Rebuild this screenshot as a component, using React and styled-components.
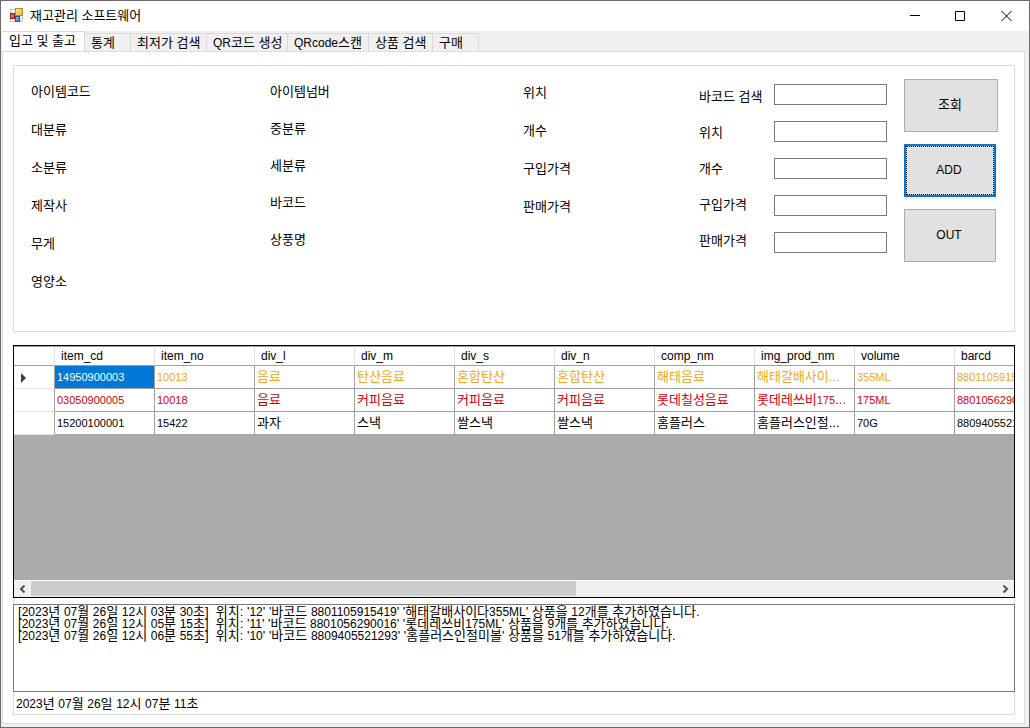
import React from "react";
import styled, { createGlobalStyle, css } from "styled-components";

const Global = createGlobalStyle`
  *, *::before, *::after { box-sizing: border-box; }
  body {
    margin: 0;
    background: #fff;
    color: #000;
    font: 13px/16px "Liberation Sans", "Noto Sans CJK KR", sans-serif;
  }
  button, input { font: inherit; color: inherit; border-radius: 0; margin: 0; }
`;

const Window = styled.div`
  min-height: 100vh;
  display: flex;
  flex-direction: column;
  border: 1px solid #6b696b;
  background: #f0f0f0;
`;

const TitleBar = styled.header`
  display: flex;
  align-items: center;
  height: 30px;
  padding-left: 8px;
  background: #fff;
`;

const Title = styled.h1`
  flex: 1;
  margin: 0 0 0 5px;
  font-size: 13px;
  line-height: 16px;
  font-weight: 400;
`;

const CaptionButton = styled.button`
  display: flex;
  align-items: center;
  justify-content: center;
  width: 46px;
  height: 28px;
  padding: 0;
  border: 0;
  background: transparent;
`;

const TabStrip = styled.nav`
  display: flex;
  align-items: flex-end;
  height: 20px;
  padding-left: 1px;
`;

const Tab = styled.button`
  width: ${(p) => p.$width}px;
  height: 18px;
  padding: 0 0 0 6px;
  border: solid #d9d9d9;
  border-width: 1px 1px 0 0;
  background: #f0f0f0;
  text-align: left;
  line-height: 16px;
  white-space: nowrap;
  ${(p) =>
    p.$active &&
    css`
      height: 20px;
      padding: 0 0 2px 7px;
      background: #fff;
    `}
`;

const Page = styled.main`
  flex: 1;
  display: flex;
  flex-direction: column;
  margin: 0 4px 3px 1px;
  padding: 13px 9px 8px 10px;
  border: 1px solid #dcdcdc;
  background: #fff;
`;

const Panel = styled.section`
  display: grid;
  grid-template-columns: 239fr 253fr 176fr 75px 130px 94px;
  align-items: start;
  min-height: 267px;
  padding: 13px 16px 13px 17px;
  border: 1px solid #dcdcdc;
`;

const Stack = styled.div`
  display: flex;
  flex-direction: column;
  align-items: flex-start;
  gap: ${(p) => p.$gap}px;
  padding-top: ${(p) => p.$top || 0}px;
`;

const Caption = styled.span`
  white-space: nowrap;
`;

const FieldLabel = styled.label`
  white-space: nowrap;
`;

const Field = styled.input`
  width: 113px;
  height: 21px;
  padding: 0 3px;
  border: 1px solid #7a7a7a;
  background: #fff;
`;

const ActionButton = styled.button`
  width: ${(p) => (p.$wide ? 94 : 92)}px;
  height: 53px;
  padding: 0 2px 2px 0;
  border: 1px solid #adadad;
  background: #e1e1e1;
  ${(p) =>
    p.$focused &&
    css`
      border: 2px solid #0078d7;
      outline: 1px dotted #000;
      outline-offset: -3px;
    `}
`;

const Latin = styled.span`
  font-size: ${(p) => p.$size}px;
  line-height: 12px;
`;

const DataGrid = styled.section`
  flex: 1;
  display: flex;
  flex-direction: column;
  min-height: 253px;
  margin-top: 13px;
  border: 1px solid #000;
  background: #ababab;
`;

const GridView = styled.div`
  flex: 1;
  overflow: hidden;
  border-top: 1px solid #a0a0a0;
`;

const Table = styled.table`
  width: 1041px;
  table-layout: fixed;
  border-collapse: separate;
  border-spacing: 0;
  background: #fff;
`;

const HeadCell = styled.th`
  width: ${(p) => (p.$corner ? 41 : 100)}px;
  height: 19px;
  padding: 0 6px;
  border: solid #e3e3e3;
  border-width: 0 1px 1px 0;
  border-bottom-color: #a0a0a0;
  font-size: 12px;
  font-weight: 400;
  text-align: left;
`;

const RowHead = styled.th`
  height: 23px;
  padding: 2px 7px 0;
  border: solid #e3e3e3;
  border-width: 0 1px 1px 0;
  border-right-color: #a0a0a0;
  text-align: left;
  line-height: 0;
`;

const Cell = styled.td`
  height: 23px;
  padding: 0 2px;
  border: solid #a0a0a0;
  border-width: 0 1px 1px 0;
  color: ${(p) => p.$color};
  white-space: nowrap;
  ${(p) =>
    p.$selected &&
    css`
      background: #0078d7;
      color: #fff;
    `}
`;

const ScrollBar = styled.div`
  display: flex;
  height: 17px;
  border-top: 1px solid #fff;
  background: #f0f0f0;
`;

const ScrollButton = styled.button`
  display: flex;
  align-items: center;
  justify-content: center;
  width: 17px;
  height: 16px;
  padding: 0;
  border: 0;
  background: #f0f0f0;
`;

const ScrollTrack = styled.div`
  flex: 1;
`;

const ScrollThumb = styled.div`
  width: 56.4%;
  height: 15px;
  background: #cdcdcd;
`;

const LogArea = styled.section`
  padding-top: 6px;
  border: solid #dcdcdc;
  border-width: 0 1px 1px;
`;

const Log = styled.div`
  min-height: 88px;
  margin: 0 -1px;
  padding: 1px 4px;
  border: 1px solid #7a7a7a;
  background: #fff;
`;

const LogLine = styled.p`
  margin: 0;
  line-height: 12px;
  white-space: pre-wrap;
`;

const Clock = styled.p`
  margin: 0;
  padding: 4px 2px 2px;
`;

const tabs = [
  ["입고 및 출고", 83],
  ["통계", 46],
  ["최저가 검색", 76],
  ["QR코드 생성", 81],
  ["QRcode스캔", 81],
  ["상품 검색", 64],
  ["구매", 46],
];

const itemColumns = [
  { gap: 22, top: 5, labels: ["아이템코드", "대분류", "소분류", "제작사", "무게", "영양소"] },
  { gap: 21, top: 5, labels: ["아이템넘버", "중분류", "세분류", "바코드", "상풍명"] },
  { gap: 22, top: 6, labels: ["위치", "개수", "구입가격", "판매가격"] },
];

const fields = [
  ["barcode", "바코드 검색"],
  ["place", "위치"],
  ["count", "개수"],
  ["cost", "구입가격"],
  ["price", "판매가격"],
];

const columns = ["item_cd", "item_no", "div_l", "div_m", "div_s", "div_n", "comp_nm", "img_prod_nm", "volume", "barcd"];

const rows = [
  {
    color: "#f5a81c",
    cells: ["14950900003", "10013", "음료", "탄산음료", "혼합탄산", "혼합탄산", "해태음료", "해태갈배사이...", "355ML", "8801105915419"],
  },
  {
    color: "#d8000f",
    cells: ["03050900005", "10018", "음료", "커피음료", "커피음료", "커피음료", "롯데칠성음료", "롯데레쓰비175...", "175ML", "8801056290016"],
  },
  {
    color: "#000",
    cells: ["15200100001", "15422", "과자", "스낵", "쌀스낵", "쌀스낵", "홈플러스", "홈플러스인절...", "70G", "8809405521293"],
  },
];

const log = [
  "[2023년 07월 26일 12시 03분 30초]  위치: '12' '바코드 8801105915419' '해태갈배사이다355ML' 상품을 12개를 추가하였습니다.",
  "[2023년 07월 26일 12시 05분 15초]  위치: '11' '바코드 8801056290016' '롯데레쓰비175ML' 상품을 9개를 추가하였습니다.",
  "[2023년 07월 26일 12시 06분 55초]  위치: '10' '바코드 8809405521293' '홈플러스인절미볼' 상품을 51개를 추가하였습니다.",
];

// Latin letters and digits run narrower than the Hangul around them.
const Mixed = ({ children, size = 12 }) =>
  children.split(/([0-9A-Za-z]+)/).map((run, i) =>
    i % 2 ? <Latin key={i} $size={size}>{run}</Latin> : run
  );

const AppIcon = () => (
  <svg width="16" height="16" viewBox="0 0 16 16" aria-hidden="true">
    <defs>
      <linearGradient id="gold" x1="0" y1="0" x2="1" y2="1">
        <stop offset="0" stopColor="#fff0a8" />
        <stop offset="1" stopColor="#e9a820" />
      </linearGradient>
      <linearGradient id="blue" x1="0" y1="0" x2="1" y2="1">
        <stop offset="0" stopColor="#a9c8f2" />
        <stop offset="1" stopColor="#3769b8" />
      </linearGradient>
    </defs>
    <rect x="1.5" y="1.5" width="12" height="12" fill="#f1efeb" stroke="#cbc6be" />
    <rect x="1.5" y="5.5" width="4" height="5" fill="#c9685f" stroke="#8e1f1c" />
    <rect x="6.500" y=".5" width="7" height="7" fill="url(#gold)" stroke="#b8892a" />
    <rect x="6.500" y="8.500" width="4" height="5" fill="url(#blue)" stroke="#2a559c" />
  </svg>
);

const Glyph = ({ d }) => (
  <svg width="11" height="11" viewBox="0 0 11 11" aria-hidden="true">
    <path d={d} fill="none" stroke="#000" />
  </svg>
);

const Chevron = ({ d }) => (
  <svg width="7" height="8" viewBox="0 0 7 8" aria-hidden="true">
    <path d={d} fill="none" stroke="#505050" strokeWidth="2" />
  </svg>
);

export default function App() {
  return (
    <>
      <Global />
      <Window>
        <TitleBar>
          <AppIcon />
          <Title>재고관리 소프트웨어</Title>
          <CaptionButton aria-label="최소화"><Glyph d="M1 4.500H11" /></CaptionButton>
          <CaptionButton aria-label="최대화"><Glyph d="M.5 .5H9.500V9.500H.5Z" /></CaptionButton>
          <CaptionButton aria-label="닫기"><Glyph d="M.5 0L10.500 10M10.500 0L.5 10" /></CaptionButton>
        </TitleBar>
        <TabStrip>
          {tabs.map(([name, width], i) => (
            <Tab key={name} $width={width} $active={i === 0}><Mixed>{name}</Mixed></Tab>
          ))}
        </TabStrip>
        <Page>
          <Panel>
            {itemColumns.map((c) => (
              <Stack key={c.labels[0]} $gap={c.gap} $top={c.top}>
                {c.labels.map((l) => <Caption key={l}>{l}</Caption>)}
              </Stack>
            ))}
            <Stack $gap={20} $top={10}>
              {fields.map(([id, l]) => <FieldLabel key={id} htmlFor={id}>{l}</FieldLabel>)}
            </Stack>
            <Stack $gap={16} $top={5}>
              {fields.map(([id]) => <Field key={id} id={id} type="text" />)}
            </Stack>
            <Stack $gap={12}>
              <ActionButton $wide>조회</ActionButton>
              <ActionButton $focused><Mixed>ADD</Mixed></ActionButton>
              <ActionButton><Mixed>OUT</Mixed></ActionButton>
            </Stack>
          </Panel>
          <DataGrid>
            <GridView>
              <Table>
                <thead>
                  <tr>
                    <HeadCell $corner aria-label="행" />
                    {columns.map((c) => <HeadCell key={c} scope="col">{c}</HeadCell>)}
                  </tr>
                </thead>
                <tbody>
                  {rows.map((r, ri) => (
                    <tr key={r.cells[0]}>
                      <RowHead scope="row">
                        {ri === 0 && (
                          <svg width="5" height="10" viewBox="0 0 5 10" aria-label="현재 행">
                            <path d="M0 0L5 5L0 10Z" fill="#404040" />
                          </svg>
                        )}
                      </RowHead>
                      {r.cells.map((c, ci) => (
                        <Cell key={ci} $color={r.color} $selected={ri === 0 && ci === 0}>
                          <Mixed size={11}>{c}</Mixed>
                        </Cell>
                      ))}
                    </tr>
                  ))}
                </tbody>
              </Table>
            </GridView>
            <ScrollBar>
              <ScrollButton aria-label="왼쪽으로"><Chevron d="M5.500 .5L2 4L5.500 7.500" /></ScrollButton>
              <ScrollTrack><ScrollThumb /></ScrollTrack>
              <ScrollButton aria-label="오른쪽으로"><Chevron d="M1.500 .5L5 4L1.500 7.500" /></ScrollButton>
            </ScrollBar>
          </DataGrid>
          <LogArea>
            <Log role="log" aria-label="기록">
              {log.map((line) => <LogLine key={line}><Mixed>{line}</Mixed></LogLine>)}
            </Log>
            <Clock><Mixed>2023년 07월 26일 12시 07분 11초</Mixed></Clock>
          </LogArea>
        </Page>
      </Window>
    </>
  );
}
